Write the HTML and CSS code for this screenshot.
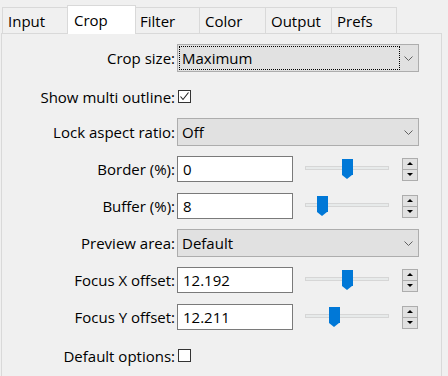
FILE: index.html
```html
<!DOCTYPE html>
<html lang="en">
<head>
    <meta charset="UTF-8">
    <title>Crop options</title>
    <link rel="stylesheet" href="styles.css">
</head>
<body>
    <div class="tabs">
        <div class="tab tab-input">Input</div>
        <div class="tab tab-crop active">Crop</div>
        <div class="tab tab-filter">Filter</div>
        <div class="tab tab-color">Color</div>
        <div class="tab tab-output">Output</div>
        <div class="tab tab-prefs">Prefs</div>
    </div>

    <div class="panel">
        <div class="row">
            <label class="label">Crop size:</label>
            <div class="combo focused">
                <span class="combo-text">Maximum</span>
                <svg class="chevron" width="9" height="5" viewBox="0 0 9 5"><path d="M0.5 0.5 L4.5 4.5 L8.5 0.5" fill="none" stroke="#606060" stroke-width="1"/></svg>
            </div>
        </div>

        <div class="row check-row">
            <label class="label">Show multi outline:</label>
            <div class="check">
                <svg width="11" height="11" viewBox="0 0 11 11"><path d="M1.5 5.5 L4 8.5 L9.5 1.5" fill="none" stroke="#222" stroke-width="1.1"/></svg>
            </div>
        </div>

        <div class="row">
            <label class="label">Lock aspect ratio:</label>
            <div class="combo">
                <span class="combo-text">Off</span>
                <svg class="chevron" width="9" height="5" viewBox="0 0 9 5"><path d="M0.5 0.5 L4.5 4.5 L8.5 0.5" fill="none" stroke="#606060" stroke-width="1"/></svg>
            </div>
        </div>

        <div class="row">
            <label class="label">Border (%):</label>
            <div class="field">0</div>
            <div class="slider"><div class="track"></div><div class="thumb" style="left: 37px"></div></div>
            <div class="spin"><div class="spin-btn"><span class="up"></span></div><div class="spin-btn"><span class="down"></span></div></div>
        </div>

        <div class="row">
            <label class="label">Buffer (%):</label>
            <div class="field">8</div>
            <div class="slider"><div class="track"></div><div class="thumb" style="left: 12px"></div></div>
            <div class="spin"><div class="spin-btn"><span class="up"></span></div><div class="spin-btn"><span class="down"></span></div></div>
        </div>

        <div class="row">
            <label class="label">Preview area:</label>
            <div class="combo">
                <span class="combo-text">Default</span>
                <svg class="chevron" width="9" height="5" viewBox="0 0 9 5"><path d="M0.5 0.5 L4.5 4.5 L8.5 0.5" fill="none" stroke="#606060" stroke-width="1"/></svg>
            </div>
        </div>

        <div class="row">
            <label class="label">Focus X offset:</label>
            <div class="field">12.192</div>
            <div class="slider"><div class="track"></div><div class="thumb" style="left: 37px"></div></div>
            <div class="spin"><div class="spin-btn"><span class="up"></span></div><div class="spin-btn"><span class="down"></span></div></div>
        </div>

        <div class="row">
            <label class="label">Focus Y offset:</label>
            <div class="field">12.211</div>
            <div class="slider"><div class="track"></div><div class="thumb" style="left: 24px"></div></div>
            <div class="spin"><div class="spin-btn"><span class="up"></span></div><div class="spin-btn"><span class="down"></span></div></div>
        </div>

        <div class="row check-row">
            <label class="label">Default options:</label>
            <div class="check"></div>
        </div>
    </div>
</body>
</html>
```

FILE: styles.css
```css
body {
    margin: 0;
    background-color: #f0f0f0;
    font-family: "Open Sans", "Noto Sans", sans-serif;
    font-size: 15px;
    color: #000;
    overflow: hidden;
}

.tabs {
    display: flex;
    align-items: flex-end;
    height: 34px;
    padding-left: 2px;
    position: relative;
    z-index: 1;
}

.tab {
    box-sizing: border-box;
    height: 26px;
    margin-bottom: 1px;
    padding-left: 5px;
    padding-top: 1px;
    line-height: 25px;
    border-top: 1px solid #d9d9d9;
    border-left: 1px solid #d9d9d9;
    background-color: #f0f0f0;
}

.tab-input { width: 65px; }
.tab-filter { width: 63px; border-left: none; padding-left: 4px; }
.tab-color { width: 66px; }
.tab-output { width: 66px; }
.tab-prefs { width: 66px; border-right: 1px solid #d9d9d9; }

.tab.active {
    width: 69px;
    height: 29px;
    margin-bottom: 0;
    padding-left: 6px;
    padding-top: 0;
    line-height: 28px;
    border-right: 1px solid #d9d9d9;
    background-color: #ffffff;
}

.panel {
    margin-top: -1px;
    margin-left: 1px;
    width: 441px;
    height: 360px;
    box-sizing: border-box;
    border: 1px solid #d9d9d9;
    padding-top: 10px;
    display: flex;
    flex-direction: column;
    gap: 9px;
}

.row {
    display: flex;
    align-items: center;
    height: 28px;
}

.label {
    width: 173px;
    padding-right: 2px;
    text-align: right;
    white-space: nowrap;
}

.check-row {
    padding-top: 3px;
    box-sizing: border-box;
}

.combo {
    position: relative;
    box-sizing: border-box;
    width: 242px;
    height: 28px;
    border: 1px solid #adadad;
    background-color: #e1e1e1;
    display: flex;
    align-items: center;
    padding-left: 4px;
}

.combo.focused::before {
    content: "";
    position: absolute;
    left: 1px;
    top: 1px;
    width: 219px;
    height: 22px;
    border: 1px dotted #000;
}

.chevron {
    position: absolute;
    right: 5px;
    top: 11px;
}

.check {
    box-sizing: border-box;
    width: 13px;
    height: 13px;
    border: 1px solid #333;
    background-color: #fff;
    margin-left: 1px;
}

.check svg {
    display: block;
}

.field {
    box-sizing: border-box;
    width: 116px;
    height: 26px;
    border: 1px solid #7a7a7a;
    background-color: #fff;
    padding-left: 5px;
    line-height: 24px;
}

.slider {
    position: relative;
    width: 84px;
    height: 22px;
    margin-left: 12px;
}

.track {
    position: absolute;
    left: 0;
    right: 0;
    top: 8px;
    height: 4px;
    box-sizing: border-box;
    border: 1px solid #d6d6d6;
    background-color: #e7eaea;
}

.thumb {
    position: absolute;
    top: 1px;
    width: 11px;
    height: 16px;
    background-color: #0078d7;
}

.thumb::after {
    content: "";
    position: absolute;
    left: 0;
    top: 16px;
    border-left: 5.5px solid transparent;
    border-right: 5.5px solid transparent;
    border-top: 4px solid #0078d7;
}

.spin {
    margin-left: 13px;
    display: flex;
    flex-direction: column;
}

.spin-btn {
    box-sizing: border-box;
    width: 16px;
    height: 12px;
    border: 1px solid #adadad;
    background-color: #e1e1e1;
    display: flex;
    align-items: center;
    justify-content: center;
}

.spin-btn + .spin-btn {
    margin-top: -1px;
}

.up {
    border-left: 3px solid transparent;
    border-right: 3px solid transparent;
    border-bottom: 3px solid #000;
}

.down {
    border-left: 3px solid transparent;
    border-right: 3px solid transparent;
    border-top: 3px solid #000;
}
```
